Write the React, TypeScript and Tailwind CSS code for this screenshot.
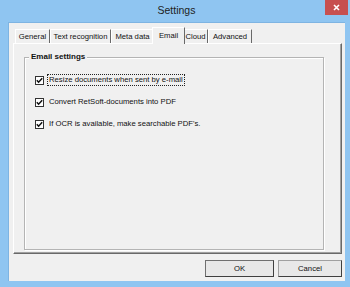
import React from "react";

const font = { fontFamily: '"Liberation Sans", Arial, sans-serif' };

function Check() {
  return (
    <div className="w-[9px] h-[9px] border border-[#333] bg-white flex items-center justify-center shrink-0">
      <svg width="7" height="7" viewBox="0 0 7 7">
        <path d="M0.8 3.2 L2.6 5.2 L6.2 1.2" stroke="#111" strokeWidth="1.5" fill="none" />
      </svg>
    </div>
  );
}

function Tab({ label, w, selected }: { label: string; w: number; selected?: boolean }) {
  if (selected) {
    return (
      <div
        className="relative z-10 -mx-[2px] h-[17px] -mb-[1px] bg-[#f0f0f0] border-l border-t border-white border-r border-r-[#696969] flex items-start justify-center pt-[2px] text-[7.7px] text-[#111]"
        style={{ width: w + 4 }}
      >
        {label}
      </div>
    );
  }
  return (
    <div
      className="h-[14px] bg-[#f0f0f0] border-l border-t border-white border-r border-r-[#696969] flex items-center justify-center text-[7.7px] text-[#111]"
      style={{ width: w }}
    >
      {label}
    </div>
  );
}

export default function App() {
  return (
    <div className="relative w-[350px] h-[287px] bg-[#8fc5f1] flex flex-col overflow-hidden" style={font}>
      <div className="h-[22px] flex items-center justify-center pl-[3px] text-[10.5px] text-[#1e1e1e]">Settings</div>
      <div className="absolute left-[325px] top-0 w-[23px] h-[15px] bg-[#c75050] flex items-center justify-center">
        <svg width="7" height="7" viewBox="0 0 7 7">
          <path d="M1 1 L6 6 M6 1 L1 6" stroke="#fff" strokeWidth="1.6" />
        </svg>
      </div>
      <div className="ml-[8px] mr-[5px] h-[259px] bg-[#f0f0f0] border-l border-t border-[#7eb4e2] flex flex-col pl-[4px] pr-[2px] pt-[5px]">
        <div className="flex items-end pl-[2px] h-[15px]">
          <Tab label="General" w={35} />
          <Tab label="Text recognition" w={61} />
          <Tab label="Meta data" w={43} />
          <Tab label="Email" w={29} selected />
          <Tab label="Cloud" w={25} />
          <Tab label="Advanced" w={44} />
        </div>
        <div className="w-[329px] h-[211px] border-l border-t border-white border-r border-b border-r-[#696969] border-b-[#696969] shadow-[inset_-1px_-1px_0_#a0a0a0] pl-[10px] pr-[17px] pt-[8px]">
          <div className="relative h-[193px] border border-[#b4b4b4] shadow-[inset_1px_1px_0_#fff,1px_1px_0_#fff] mt-[5px]">
            <div className="absolute -top-[6px] left-[4px] bg-[#f0f0f0] px-[2px] text-[8px] font-bold text-[#111] leading-[10px]">
              Email settings
            </div>
            <div className="flex flex-col pl-[10px] pt-[17px] gap-[12px]">
              <div className="flex items-center h-[10px]">
                <Check />
                <span className="ml-[3px] border border-dotted border-[#222] px-[1px] h-[12px] leading-[10px] text-[7.7px] text-[#111]">
                  Resize documents when sent by e-mail
                </span>
              </div>
              <div className="flex items-center h-[10px]">
                <Check />
                <span className="ml-[5px] text-[7.7px] text-[#111]">Convert RetSoft-documents into PDF</span>
              </div>
              <div className="flex items-center h-[10px]">
                <Check />
                <span className="ml-[5px] text-[7.7px] text-[#111]">If OCR is available, make searchable PDF's.</span>
              </div>
            </div>
          </div>
        </div>
        <div className="flex justify-end gap-[4px] mt-[6px] pr-0 mr-[1px]">
          <button className="w-[69px] h-[17px] bg-[#e8e8e8] border border-[#707070] border-r-[#404040] border-b-[#404040] text-[7.7px] text-[#111] flex items-center justify-center">
            OK
          </button>
          <button className="w-[64px] h-[17px] bg-[#e8e8e8] border border-[#a0a0a0] border-r-[#404040] border-b-[#404040] text-[7.7px] text-[#111] flex items-center justify-center">
            Cancel
          </button>
        </div>
      </div>
    </div>
  );
}
